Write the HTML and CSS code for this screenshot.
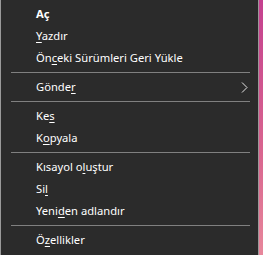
FILE: index.html
```html
<!DOCTYPE html>
<html lang="tr">
<head>
    <meta charset="UTF-8">
    <title>Bağlam Menüsü</title>
    <link rel="stylesheet" href="styles.css">
</head>
<body>
    <div class="menu">
        <div class="item bold">Aç</div>
        <div class="item"><u>Y</u>azdır</div>
        <div class="item">Ön<u>c</u>eki Sürümleri Geri Yükle</div>
        <div class="sep"></div>
        <div class="item">Gönde<u>r</u>
            <svg class="chev" width="7" height="11" viewBox="0 0 7 11"><path d="M1 0.5 L6 5.5 L1 10.5" fill="none" stroke="#e6e6e6" stroke-width="1"/></svg>
        </div>
        <div class="sep"></div>
        <div class="item">Ke<u>s</u></div>
        <div class="item">K<u>o</u>pyala</div>
        <div class="sep"></div>
        <div class="item">Kısayol o<u>l</u>uştur</div>
        <div class="item">Si<u>l</u></div>
        <div class="item">Yeni<u>d</u>en adlandır</div>
        <div class="sep"></div>
        <div class="item">Ö<u>z</u>ellikler</div>
    </div>
</body>
</html>
```

FILE: styles.css
```css
body {
    margin: 0;
    width: 263px;
    height: 255px;
    overflow: hidden;
    background: linear-gradient(180deg, #c4408f, #d9658f 60%, #e7879b);
    font-family: "Noto Sans", sans-serif;
}
.menu {
    width: 257px;
    height: 255px;
    background: #2b2b2b;
    border-left: 1px solid #9a9a9a;
    border-right: 1px solid #9a9a9a;
    padding-top: 3px;
    box-sizing: content-box;
    color: #fff;
    font-size: 11.2px;
}
.item {
    position: relative;
    height: 22px;
    line-height: 22px;
    padding-left: 35px;
    white-space: nowrap;
}
.item u {
    text-decoration-thickness: 1px;
    text-underline-offset: 2px;
}
.bold {
    font-weight: bold;
}
.sep {
    height: 1px;
    margin: 3px 8px 3px 10px;
    background: #808080;
}
.chev {
    position: absolute;
    left: 240px;
    top: 6px;
}
```
